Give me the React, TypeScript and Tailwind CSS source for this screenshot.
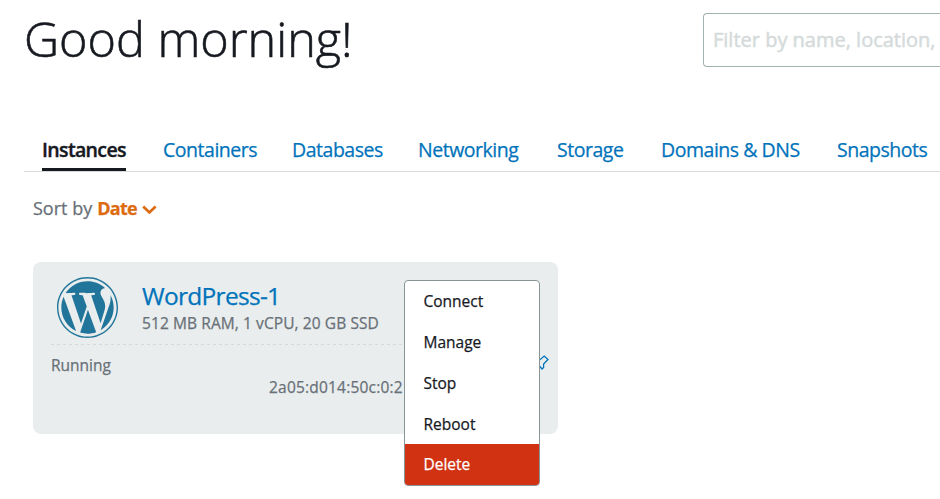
import React from "react";
import { FaWordpress } from "react-icons/fa";

const tabs = [
  { label: "Containers", box: "w-[93px]" },
  { label: "Databases", box: "w-[90px]" },
  { label: "Networking", box: "w-[103px]" },
  { label: "Storage", box: "w-[68px]" },
  { label: "Domains & DNS", box: "w-[140px]" },
  { label: "Snapshots", box: "w-[91px]" },
];

const actions = ["Connect", "Manage", "Stop", "Reboot"];

export default function App() {
  return (
    <div className="relative h-[499px] w-[940px] overflow-hidden bg-white font-['Open_Sans',sans-serif] whitespace-nowrap text-[#16191f] [-webkit-text-stroke:0.25px_currentColor]">
      <header className="flex h-[128px] items-start justify-between overflow-hidden pl-[24px]">
        <h1 className="text-[48.5px] leading-[76px] font-light [-webkit-text-stroke:0.6px_currentColor]">Good morning!</h1>
        <div className="mt-[13px] flex h-[54px] w-[237px] shrink-0 items-center rounded-l border border-r-0 border-[#a2b1b2] pl-[9px] text-[20px] text-[#d5dbdb] [-webkit-text-stroke:0.5px_currentColor]">
          Filter by name, location,
        </div>
      </header>
      <nav className="ml-6 flex h-[44px] gap-9 border-b border-[#d5dbdb] pl-[18px] text-[19.5px] leading-[44px] tracking-[-0.47px] text-[#0073bb]">
        <span className="mr-px h-[43px] w-[84px] shrink-0 border-b-[3px] border-[#16191f] font-semibold tracking-[-0.65px] text-[#16191f] [-webkit-text-stroke:0.4px_currentColor]">Instances</span>
        {tabs.map((t) => (
          <span key={t.label} className={`shrink-0 ${t.box}`}>{t.label}</span>
        ))}
      </nav>
      <div className="mt-[21px] ml-[33px] flex h-[30px] items-center text-[18px] leading-[28px] text-[#687078]">
        Sort by <b className="ml-[5px] w-[40px] tracking-[-0.7px] text-[#dd6b10]">Date</b>
        <svg className="mt-[3px] ml-[5px]" width="15" height="10" viewBox="0 0 15 10" fill="none" stroke="#dd6b10" strokeWidth="2.8"><path d="M1.2 1.5 7.4 7.4 13.6 1.5" /></svg>
      </div>
      <section className="mt-[39px] ml-[33px] h-[172px] w-[525px] rounded-[8px] bg-[#e9eded] px-[18px] pt-[14px] text-[15.5px] text-[#687078]">
        <div className="flex h-[68px]">
          <FaWordpress className="ml-[5px] size-[63px] shrink-0 text-[#21759b]" />
          <div className="ml-[23px]">
            <h2 className="text-[24.5px] leading-[39px] tracking-[-0.7px] text-[#0073bb]">WordPress-1</h2>
            <p className="leading-[17px] tracking-[0.09px]">512 MB RAM, 1 vCPU, 20 GB SSD</p>
          </div>
        </div>
        <div className="h-px bg-[repeating-linear-gradient(90deg,#d5dbdb_0_3px,transparent_3px_6px)]" />
        <p className="mt-[9px] leading-[22px]">Running</p>
        <p className="ml-[218px] leading-[22px] tracking-[0.2px]">2a05:d014:50c:0:2</p>
      </section>
      <svg className="absolute top-[354px] left-[539px]" width="12" height="17" fill="none" stroke="#0073bb" strokeWidth="1.3"><path d="M0 6.5 5.2 2 9 5.5 4.6 10V13.5L3 15 0 11.5" /></svg>
      <div className="absolute top-[280px] left-[404px] flex h-[206px] w-[136px] flex-col overflow-hidden rounded border border-[#879596] bg-white text-[15.5px]">
        {actions.map((a) => (
          <div key={a} className="h-[41px] pl-[18.5px] leading-[41px]">{a}</div>
        ))}
        <div className="-mt-px h-[42px] bg-[#d13212] pl-[18.5px] leading-[41px] text-white">Delete</div>
      </div>
    </div>
  );
}
